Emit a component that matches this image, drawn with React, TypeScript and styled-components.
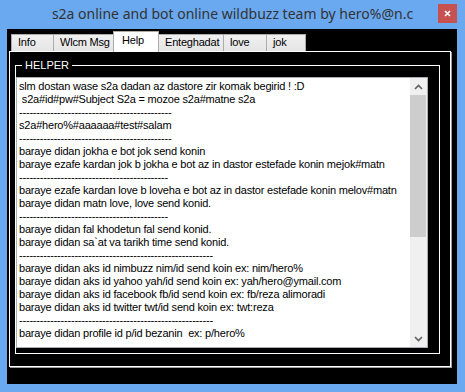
import styled, { createGlobalStyle } from 'styled-components'

const GlobalStyle = createGlobalStyle`
  html, body {
    margin: 0;
    padding: 0;
    background: #6aa9ef;
  }
`

const Window = styled.div`
  width: 465px;
  height: 392px;
  background: #6aa9ef;
  display: flex;
  flex-direction: column;
  font-family: "Liberation Sans", Arial, sans-serif;
`

const TitleBar = styled.div`
  height: 29px;
  display: grid;
  grid-template-columns: 1fr auto 1fr;
  align-items: start;
`

const Title = styled.div`
  grid-column: 2;
  font-family: "Noto Sans", "Open Sans", sans-serif;
  font-size: 14px;
  line-height: 28px;
  color: #333;
  white-space: nowrap;
`

const CloseButton = styled.div`
  grid-column: 3;
  justify-self: end;
  margin: 4px 8px 0 0;
  width: 19px;
  height: 19px;
  background: #c75050;
  display: flex;
  align-items: center;
  justify-content: center;
`

const Client = styled.div`
  flex: 1;
  margin: 0 8px 8px 7px;
  background: #000;
  padding: 2px 6px 17px 2px;
  display: flex;
  flex-direction: column;
`

const TabStrip = styled.div`
  height: 20px;
  padding-left: 2px;
  display: flex;
  align-items: flex-end;
`

const Tab = styled.div<{ $width: number; $active?: boolean }>`
  box-sizing: border-box;
  width: ${p => p.$width}px;
  height: ${p => (p.$active ? 21 : 17)}px;
  margin-bottom: ${p => (p.$active ? -1 : 0)}px;
  margin-right: -1px;
  position: relative;
  z-index: ${p => (p.$active ? 2 : 1)};
  border: 1px solid #acacac;
  border-bottom: none;
  background: ${p => (p.$active ? '#fff' : 'linear-gradient(#f0f0f0, #e5e5e5)')};
  padding-left: ${p => (p.$active ? 8 : 6)}px;
  padding-top: ${p => (p.$active ? 2 : 1)}px;
  font-size: 11px;
  line-height: 13px;
  letter-spacing: -0.2px;
  color: #000;
  white-space: nowrap;
`

const Panel = styled.div`
  flex: 1;
  border: 1px solid #fff;
  box-shadow: 1px 1px 0 #a0a0a0;
  padding: 7px 10px 12px 5px;
`

const Group = styled.fieldset`
  margin: 0;
  border: 1px solid #fff;
  padding: 5px 11px 5px 0;
  min-width: 0;
`

const GroupTitle = styled.legend`
  margin-left: 6px;
  padding: 0 3px;
  color: #fff;
  font-size: 11px;
  line-height: 13px;
`

const TextBox = styled.div`
  height: 271px;
  box-sizing: border-box;
  border: 1px solid #abadb3;
  background: #fff;
  display: flex;
`

const TextContent = styled.div`
  flex: 1;
  overflow: hidden;
  padding: 2px 0 0 2px;
  font-size: 11px;
  line-height: 13px;
  letter-spacing: -0.2px;
  color: #000;
  white-space: pre;
`

const ScrollBar = styled.div`
  width: 17px;
  background: #f0f0f0;
  display: flex;
  flex-direction: column;
`

const ScrollArrow = styled.div`
  height: 17px;
  display: flex;
  align-items: center;
  justify-content: center;
`

const ScrollTrack = styled.div`
  flex: 1;
`

const ScrollThumb = styled.div`
  margin: 0 1px 0 0;
  height: 142px;
  background: #cdcdcd;
`

const tabs = [
  { label: 'Info', width: 43 },
  { label: 'Wlcm Msg', width: 61 },
  { label: 'Help', width: 46, active: true },
  { label: 'Enteghadat', width: 66 },
  { label: 'love', width: 44 },
  { label: 'jok', width: 40 },
]

const helpLines = [
  'slm dostan wase s2a dadan az dastore zir komak begirid ! :D',
  ' s2a#id#pw#Subject S2a = mozoe s2a#matne s2a',
  '-'.repeat(44),
  's2a#hero%#aaaaaa#test#salam',
  '-'.repeat(44),
  'baraye didan jokha e bot jok send konin',
  'baraye ezafe kardan jok b jokha e bot az in dastor estefade konin mejok#matn',
  '-'.repeat(43),
  'baraye ezafe kardan love b loveha e bot az in dastor estefade konin melov#matn',
  'baraye didan matn love, love send konid.',
  '-'.repeat(43),
  'baraye didan fal khodetun fal send konid.',
  'baraye didan sa`at va tarikh time send konid.',
  '-'.repeat(56),
  'baraye didan aks id nimbuzz nim/id send koin ex: nim/hero%',
  'baraye didan aks id yahoo yah/id send koin ex: yah/hero@ymail.com',
  'baraye didan aks id facebook fb/id send koin ex: fb/reza alimoradi',
  'baraye didan aks id twitter twt/id send koin ex: twt:reza',
  '-'.repeat(56),
  'baraye didan profile id p/id bezanin  ex: p/hero%',
]

function Chevron({ up }: { up?: boolean }) {
  return (
    <svg width="9" height="6" viewBox="0 0 9 6">
      <polyline
        points={up ? '1,5 4.5,1.5 8,5' : '1,1 4.5,4.5 8,1'}
        fill="none"
        stroke="#606060"
        strokeWidth="1.6"
      />
    </svg>
  )
}

function App() {
  return (
    <>
      <GlobalStyle />
      <Window>
        <TitleBar>
          <Title>s2a online and bot online wildbuzz team by hero%@n.c</Title>
          <CloseButton>
            <svg width="7" height="7" viewBox="0 0 7 7">
              <path d="M1 1 L6 6 M6 1 L1 6" stroke="#fff" strokeWidth="1.6" />
            </svg>
          </CloseButton>
        </TitleBar>

        <Client>
          <TabStrip>
            {tabs.map(t => (
              <Tab key={t.label} $width={t.width} $active={t.active}>{t.label}</Tab>
            ))}
          </TabStrip>

          <Panel>
            <Group>
              <GroupTitle>HELPER</GroupTitle>
              <TextBox>
                <TextContent>{helpLines.join('\n')}</TextContent>
                <ScrollBar>
                  <ScrollArrow><Chevron up /></ScrollArrow>
                  <ScrollTrack>
                    <ScrollThumb />
                  </ScrollTrack>
                  <ScrollArrow><Chevron /></ScrollArrow>
                </ScrollBar>
              </TextBox>
            </Group>
          </Panel>
        </Client>
      </Window>
    </>
  )
}

export default App
